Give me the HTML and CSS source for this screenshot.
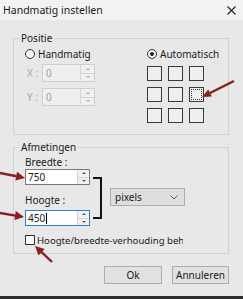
FILE: index.html
```html
<!DOCTYPE html>
<html lang="nl">
<head>
    <meta charset="UTF-8">
    <meta name="viewport" content="width=device-width, initial-scale=1.0">
    <title>Handmatig instellen</title>
    <link rel="stylesheet" href="styles.css">
</head>
<body>

    <div class="dialog">
        <div class="titlebar">
            <span class="title">Handmatig instellen</span>
            <svg class="close" width="9" height="9" viewBox="0 0 9 9">
                <path d="M0.5 0.5 L8.5 8.5 M8.5 0.5 L0.5 8.5" stroke="#222" stroke-width="1.1" fill="none"/>
            </svg>
        </div>

        <div class="content">
            <!-- Positie -->
            <fieldset class="group">
                <legend>Positie</legend>
                <div class="pos-body">
                    <div class="pos-left">
                        <label class="radio"><span class="radio-mark"></span>Handmatig</label>
                        <div class="coord-row first">
                            <span class="coord-label">X :</span>
                            <div class="spin spin-disabled">
                                <span class="spin-value">0</span>
                                <span class="spin-buttons"><i class="up"></i><i class="down"></i></span>
                            </div>
                        </div>
                        <div class="coord-row">
                            <span class="coord-label">Y :</span>
                            <div class="spin spin-disabled">
                                <span class="spin-value">0</span>
                                <span class="spin-buttons"><i class="up"></i><i class="down"></i></span>
                            </div>
                        </div>
                    </div>
                    <div class="pos-right">
                        <label class="radio"><span class="radio-mark checked"></span>Automatisch</label>
                        <div class="anchor-grid">
                            <span class="cell"></span>
                            <span class="cell"></span>
                            <span class="cell"></span>
                            <span class="cell"></span>
                            <span class="cell"></span>
                            <span class="cell selected"></span>
                            <span class="cell"></span>
                            <span class="cell"></span>
                            <span class="cell"></span>
                        </div>
                    </div>
                </div>
            </fieldset>

            <!-- Afmetingen -->
            <fieldset class="group group-dim">
                <legend>Afmetingen</legend>
                <div class="dim-body">
                    <div class="dim-row">
                        <div class="dim-fields">
                            <span class="field-label">Breedte :</span>
                            <div class="spin spin-small">
                                <span class="spin-value">750</span>
                                <span class="spin-buttons"><i class="up"></i><i class="down"></i></span>
                            </div>
                            <span class="field-label second">Hoogte :</span>
                            <div class="spin spin-small spin-focus">
                                <span class="spin-value">450<span class="caret"></span></span>
                                <span class="spin-buttons"><i class="up"></i><i class="down"></i></span>
                            </div>
                        </div>
                        <div class="bracket"></div>
                        <div class="select">
                            <span>pixels</span>
                            <svg width="8" height="5" viewBox="0 0 8 5">
                                <path d="M0.5 0.5 L4 4 L7.5 0.5" stroke="#555" stroke-width="1" fill="none"/>
                            </svg>
                        </div>
                    </div>
                    <label class="check-row">
                        <span class="checkbox"></span>
                        <span class="check-text">Hoogte/breedte-verhouding behouden</span>
                    </label>
                </div>
            </fieldset>

            <div class="buttons">
                <button class="btn btn-ok">Ok</button>
                <button class="btn btn-cancel">Annuleren</button>
            </div>
        </div>
    </div>
    <div class="taskbar"></div>

    <!-- rode pijlen over de dialoog -->
    <svg class="arrows" width="243" height="299" viewBox="0 0 243 299">
        <g stroke="#8b1e1e" stroke-width="2.4" fill="#8b1e1e">
            <line x1="234" y1="81" x2="210" y2="93"/>
            <polygon points="202,97 211.8,96.6 208.3,89.4" stroke="none"/>
            <line x1="0" y1="173" x2="16.5" y2="176.3"/>
            <polygon points="25,178 15.3,180.6 17.1,171.8" stroke="none"/>
            <line x1="0" y1="213" x2="15.5" y2="215.6"/>
            <polygon points="24,217 14.4,219.9 15.8,211.1" stroke="none"/>
            <line x1="52" y1="262" x2="41.6" y2="252.2"/>
            <polygon points="35,246 44.7,248.9 38.5,255.5" stroke="none"/>
        </g>
    </svg>

</body>
</html>
```

FILE: styles.css
```css
/* dialoog */
body {
    margin: 0;
    padding: 0;
    width: 243px;
    height: 299px;
    display: flex;
    flex-direction: column;
    position: relative;
    overflow: hidden;
    font-family: "Noto Sans", "Open Sans", sans-serif;
    font-size: 10px;
    color: #1a1a1a;
    background-color: #e8e8e8;
}
.dialog {
    flex: 1;
    display: flex;
    flex-direction: column;
}
.titlebar {
    height: 20px;
    display: flex;
    align-items: center;
    justify-content: space-between;
    padding: 0 7px 0 3px;
    background-color: #f2f2f2;
}
.title {
    font-size: 10.5px;
}
.content {
    padding: 11px 14px 0 13px;
}

/* groepen */
.group {
    margin: 0;
    padding: 0;
    min-width: 0;
    border: 1px solid #d2d2d2;
}
.group legend {
    margin-left: 5px;
    padding: 0 2px;
    line-height: 14px;
}
.group-dim {
    margin-top: 5px;
}
.pos-body {
    display: grid;
    grid-template-columns: 122px 1fr;
    padding: 2px 0 11px 11px;
}
.radio {
    display: flex;
    align-items: center;
    height: 14px;
    gap: 3px;
}
.radio-mark {
    width: 8px;
    height: 8px;
    border: 1px solid #333;
    border-radius: 50%;
    background-color: #f7f7f7;
    position: relative;
}
.radio-mark.checked::after {
    content: "";
    position: absolute;
    left: 2px;
    top: 2px;
    width: 4px;
    height: 4px;
    border-radius: 50%;
    background-color: #222;
}

/* X/Y invoer */
.coord-row {
    display: flex;
    align-items: center;
    margin-top: 6px;
}
.coord-row.first {
    margin-top: 3px;
}
.coord-label {
    width: 15px;
    padding-left: 2px;
    color: #a8a8a8;
}
.spin {
    display: flex;
    box-sizing: border-box;
    border: 1px solid #7a7a7a;
    background-color: #fff;
}
.spin-disabled {
    width: 53px;
    height: 18px;
    border-color: #cfcfcf;
    background-color: #efefef;
    color: #a0a0a0;
}
.spin-value {
    flex: 1;
    display: flex;
    align-items: center;
    padding-left: 3px;
}
.spin-buttons {
    width: 13px;
    display: flex;
    flex-direction: column;
    border-left: 1px solid #d6d6d6;
    background-color: #f0f0f0;
}
.spin-buttons i {
    flex: 1;
    display: flex;
    align-items: center;
    justify-content: center;
}
.spin-buttons i + i {
    border-top: 1px solid #d6d6d6;
}
.spin-buttons .up::before {
    content: "";
    border-left: 2px solid transparent;
    border-right: 2px solid transparent;
    border-bottom: 2px solid #555;
}
.spin-buttons .down::before {
    content: "";
    border-left: 2px solid transparent;
    border-right: 2px solid transparent;
    border-top: 2px solid #555;
}
.spin-disabled .spin-buttons .up::before {
    border-bottom-color: #aaa;
}
.spin-disabled .spin-buttons .down::before {
    border-top-color: #aaa;
}

/* ankerraster */
.anchor-grid {
    display: grid;
    grid-template-columns: repeat(3, 15px);
    grid-auto-rows: 15px;
    gap: 6px;
    margin-top: 5px;
}
.cell {
    box-sizing: border-box;
    border: 1px solid #3a3a3a;
    background-color: #efefef;
    position: relative;
}
.cell.selected::after {
    content: "";
    position: absolute;
    inset: 1px;
    border: 1px dotted #333;
}

/* afmetingen */
.dim-body {
    padding: 2px 0 6px 11px;
}
.dim-row {
    display: flex;
    align-items: flex-start;
}
.dim-fields {
    width: 65px;
    display: flex;
    flex-direction: column;
}
.field-label {
    line-height: 13px;
}
.field-label.second {
    margin-top: 9px;
}
.spin-small {
    height: 16px;
    margin-top: 0;
}
.spin-focus {
    margin-top: 3px;
    border-color: #2b7fd4;
}
.spin-small .spin-value {
    padding-left: 2px;
}
.spin-small .spin-buttons {
    width: 11px;
}
.caret {
    display: inline-block;
    width: 1px;
    height: 11px;
    margin-left: 1px;
    background-color: #000;
}
.bracket {
    box-sizing: border-box;
    width: 9px;
    height: 42px;
    margin: 21px 0 0 3px;
    border: 2px solid #111;
    border-left: none;
}
.select {
    box-sizing: border-box;
    width: 75px;
    height: 18px;
    margin: 32px 0 0 8px;
    padding: 0 6px 0 4px;
    display: flex;
    align-items: center;
    justify-content: space-between;
    border: 1px solid #adadad;
    background-color: #dedede;
}
.check-row {
    display: flex;
    align-items: center;
    height: 14px;
    margin-top: 7px;
    gap: 2px;
}
.checkbox {
    box-sizing: border-box;
    width: 10px;
    height: 10px;
    border: 1px solid #333;
    background-color: #fafafa;
}
.check-text {
    width: 146px;
    font-size: 9.6px;
    white-space: nowrap;
    overflow: hidden;
}

/* knoppen */
.buttons {
    display: flex;
    justify-content: flex-end;
    gap: 10px;
    margin-top: 12px;
}
.btn {
    height: 18px;
    padding: 0;
    font-family: inherit;
    font-size: 10px;
    color: #1a1a1a;
    border: 1px solid #adadad;
    background-color: #e1e1e1;
}
.btn-ok {
    width: 58px;
}
.btn-cancel {
    width: 57px;
}
.taskbar {
    height: 3px;
    background-color: #2e2e2e;
}
.arrows {
    position: absolute;
    left: 0;
    top: 0;
    pointer-events: none;
}
```
